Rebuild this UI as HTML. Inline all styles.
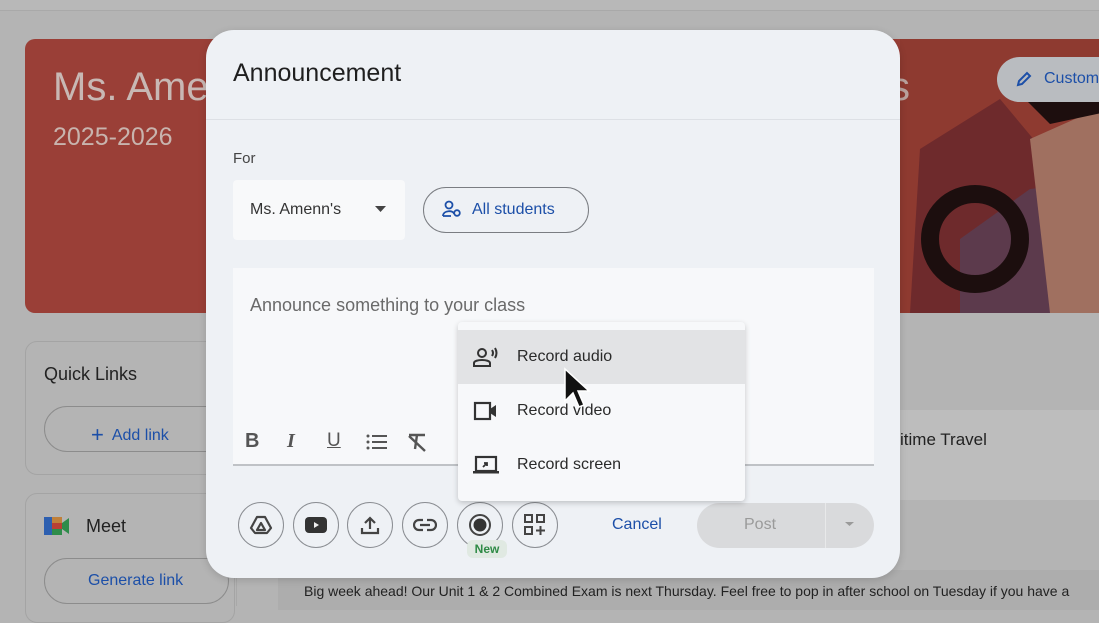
<!DOCTYPE html>
<html><head><meta charset="utf-8"><style>
*{box-sizing:border-box;margin:0;padding:0}
body{width:1099px;height:606px;overflow:hidden;background:#b4b4b4;font-family:"Liberation Sans",Arial,sans-serif;position:relative}
.a{position:absolute}
.circ{position:absolute;width:46px;height:46px;border:1.5px solid #8a8d92;border-radius:50%;top:502px;display:flex;align-items:center;justify-content:center}
.mi{position:absolute;left:0;width:287px;height:54px;display:flex;align-items:center;font-size:16px;color:#2a2a2a}
.mi svg{margin-left:15px;margin-right:18px}
</style></head><body>
<div class="a" style="left:0;top:0;width:1099px;height:11px;background:#b8b8b8;border-bottom:1px solid #a9a9a9"></div>
<!-- banner -->
<div class="a" style="left:25px;top:39px;width:1090px;height:274px;background:#9a3f37;border-radius:10px;overflow:hidden">
 <svg class="a" style="left:875px;top:0" width="220" height="274">
  <path d="M0 0H220V274H0Z" fill="#8e3a30"/>
  <path d="M20 110 L100 60 L150 120 L120 274 L10 274Z" fill="#6e2a2c"/>
  <path d="M60 200 L130 150 L220 140 L220 274 L60 274Z" fill="#5c3a4c"/>
  <path d="M130 100 L220 60 L220 274 L150 274 Z" fill="#a07060"/>
  <circle cx="75" cy="200" r="45" fill="none" stroke="#1c0e0e" stroke-width="18"/>
  <path d="M100 35 L140 20 L220 30 L220 70 L150 85 Z" fill="#1d0e0e"/>
 </svg>
 <div class="a" style="left:28px;top:26px;font-size:40px;color:#c8b8b4">Ms. Amenn's</div>
 <div class="a" style="left:28px;top:84px;font-size:25px;color:#c8b4ae">2025-2026</div>
 <div class="a" style="left:865px;top:26px;font-size:40px;color:#b9a29d">s</div>
</div>
<div class="a" style="left:997px;top:57px;width:130px;height:45px;border-radius:23px;background:#b9bcc0;color:#1c4fa8;font-size:16px;padding:13px 0 0 47px">Customize</div>
<svg class="a" style="left:1016px;top:71px" width="16" height="16"><path d="M2 14 L3 10 L11 2 L14 5 L6 13 Z" fill="none" stroke="#1c4fa8" stroke-width="2"/></svg>
<!-- left cards -->
<div class="a" style="left:25px;top:341px;width:200px;height:134px;border:1px solid #a4a4a4;border-radius:12px"></div>
<div class="a" style="left:44px;top:364px;font-size:18px;color:#222">Quick Links</div>
<div class="a" style="left:44px;top:406px;width:200px;height:46px;border:1px solid #8c8c8c;border-radius:23px;color:#1c4fa8;font-size:16px;padding:13px 0 0 46px"><span style="font-size:22px;position:relative;top:2px;margin-right:8px">+</span>Add link</div>
<div class="a" style="left:25px;top:493px;width:210px;height:130px;border:1px solid #a4a4a4;border-radius:12px"></div>
<svg class="a" style="left:44px;top:515px" width="25" height="22"><rect x="0" y="2" width="8" height="18" fill="#2d5fb0"/><rect x="8" y="2" width="10" height="6" fill="#c0803a"/><rect x="8" y="14" width="10" height="6" fill="#2e8c4a"/><path d="M18 8 L25 3 L25 19 L18 14Z" fill="#2e8c4a"/><rect x="8" y="8" width="10" height="6" fill="#b84034"/></svg>
<div class="a" style="left:86px;top:516px;font-size:18px;color:#222">Meet</div>
<div class="a" style="left:44px;top:558px;width:185px;height:46px;border:1px solid #8c8c8c;border-radius:23px;color:#1c4fa8;font-size:16px;padding:13px 0 0 43px">Generate link</div>
<div class="a" style="left:236px;top:500px;width:1px;height:106px;background:#a8a8a8"></div>
<div class="a" style="left:278px;top:570px;width:830px;height:40px;background:#adadad"></div>
<div class="a" style="left:304px;top:583px;font-size:14px;color:#222;white-space:nowrap">Big week ahead! Our Unit 1 &amp; 2 Combined Exam is next Thursday. Feel free to pop in after school on Tuesday if you have a</div>
<div class="a" style="left:900px;top:410px;width:230px;height:90px;background:#bdbdbd"></div>
<div class="a" style="left:900px;top:430px;font-size:17px;color:#222">itime Travel</div>
<!-- modal -->
<div class="a" style="left:206px;top:30px;width:694px;height:548px;background:#eef1f5;border-radius:28px;box-shadow:0 2px 8px rgba(0,0,0,.15)"></div>
<div class="a" style="left:206px;top:119px;width:694px;height:1px;background:#dde0e5"></div>
<div class="a" style="left:233px;top:59px;font-size:25px;color:#1f1f1f">Announcement</div>
<div class="a" style="left:233px;top:150px;font-size:15px;color:#444">For</div>
<div class="a" style="left:233px;top:180px;width:172px;height:60px;background:#f8f9fa;border-radius:4px;font-size:16px;color:#333;padding:21px 0 0 17px">Ms. Amenn's</div>
<svg class="a" style="left:375px;top:206px" width="12" height="7"><path d="M0 0H11L5.5 6Z" fill="#444"/></svg>
<div class="a" style="left:423px;top:187px;width:166px;height:46px;border:1px solid #7a7d82;border-radius:23px;color:#1c4fa8;font-size:16px;padding:13px 0 0 48px">All students</div>
<svg class="a" style="left:442px;top:200px" width="20" height="18"><circle cx="7" cy="5" r="3.5" fill="none" stroke="#1c4fa8" stroke-width="1.8"/><path d="M1 16 C1 10 12 10 12 14 M1 16H9" fill="none" stroke="#1c4fa8" stroke-width="1.8"/><circle cx="15" cy="13" r="2.8" fill="none" stroke="#1c4fa8" stroke-width="1.8"/></svg>
<div class="a" style="left:233px;top:268px;width:641px;height:198px;background:#f7f8fa;border-bottom:2px solid #bfc2c6"></div>
<div class="a" style="left:250px;top:295px;font-size:18px;color:#6a6a6a">Announce something to your class</div>
<div class="a" style="left:245px;top:430px;font-size:20px;font-weight:bold;color:#555">B</div>
<div class="a" style="left:287px;top:430px;font-size:20px;font-weight:bold;font-style:italic;font-family:'Liberation Serif',serif;color:#555">I</div>
<div class="a" style="left:327px;top:430px;font-size:19px;color:#555;text-decoration:underline">U</div>
<svg class="a" style="left:366px;top:433px" width="22" height="18"><g fill="#555"><circle cx="2" cy="3" r="1.5"/><circle cx="2" cy="9" r="1.5"/><circle cx="2" cy="15" r="1.5"/><rect x="6" y="2" width="15" height="2"/><rect x="6" y="8" width="15" height="2"/><rect x="6" y="14" width="15" height="2"/></g></svg>
<svg class="a" style="left:406px;top:433px" width="22" height="20"><path d="M3 2H19M11 2L9 16M3 3L19 18" stroke="#555" stroke-width="2.4" fill="none"/></svg>
<!-- bottom buttons -->
<div class="circ" style="left:238px"><svg width="24" height="22"><path d="M8 3H16L22 14L18 19H6L2 14Z M12 9L8 16H16Z" fill="none" stroke="#444" stroke-width="2.2" stroke-linejoin="round"/></svg></div>
<div class="circ" style="left:293px"><svg width="24" height="18"><rect x="1" y="1" width="22" height="16" rx="4" fill="#333"/><path d="M10 6L15 9L10 12Z" fill="#eee"/></svg></div>
<div class="circ" style="left:347px"><svg width="20" height="20"><path d="M10 14V3M5 8L10 3L15 8M2 13V18H18V13" fill="none" stroke="#444" stroke-width="2.2"/></svg></div>
<div class="circ" style="left:402px"><svg width="24" height="14"><path d="M10 2H6A5 5 0 0 0 6 12H10M14 2H18A5 5 0 0 1 18 12H14M7 7H17" fill="none" stroke="#444" stroke-width="2.2"/></svg></div>
<div class="circ" style="left:457px"><svg width="24" height="24"><circle cx="12" cy="12" r="10" fill="none" stroke="#444" stroke-width="2"/><circle cx="12" cy="12" r="6.5" fill="#333"/></svg></div>
<div class="circ" style="left:512px"><svg width="22" height="22"><g fill="none" stroke="#444" stroke-width="2"><rect x="1" y="1" width="7" height="7"/><rect x="13" y="1" width="7" height="7"/><rect x="1" y="13" width="7" height="7"/><path d="M16.5 12V21M12 16.5H21"/></g></svg></div>
<div class="a" style="left:467px;top:540px;width:40px;height:18px;background:#e0e9e2;border-radius:6px;color:#2e8a45;font-size:12px;font-weight:bold;text-align:center;padding-top:2px">New</div>
<div class="a" style="left:612px;top:516px;font-size:16px;color:#1c4fa8">Cancel</div>
<div class="a" style="left:697px;top:503px;width:177px;height:45px;background:#d9dadc;border-radius:23px"></div>
<div class="a" style="left:825px;top:503px;width:1px;height:45px;background:#e8e9ea"></div>
<div class="a" style="left:744px;top:516px;font-size:16px;color:#9a9a9a">Post</div>
<svg class="a" style="left:845px;top:522px" width="10" height="5"><path d="M0 0H9L4.5 4Z" fill="#9a9a9a"/></svg>
<!-- menu -->
<div class="a" style="left:458px;top:322px;width:287px;height:179px;background:#f7f8fa;border-radius:4px;box-shadow:0 2px 6px rgba(0,0,0,.2)">
 <div class="mi" style="top:8px;background:#e2e3e5"><svg width="26" height="20"><circle cx="9" cy="6" r="4" fill="none" stroke="#333" stroke-width="2"/><path d="M1 19V16C1 12 17 12 17 16V19Z" fill="none" stroke="#333" stroke-width="2"/><path d="M19 3Q21 6 19 9M22 1Q25 6 22 11" fill="none" stroke="#333" stroke-width="2"/></svg>Record audio</div>
 <div class="mi" style="top:62px"><svg width="26" height="20"><rect x="2" y="2" width="15" height="16" fill="none" stroke="#333" stroke-width="2.2"/><path d="M17 8L23 4V16L17 12Z" fill="#333"/></svg>Record video</div>
 <div class="mi" style="top:116px"><svg width="26" height="20"><rect x="3" y="2" width="20" height="14" fill="none" stroke="#333" stroke-width="2.2"/><rect x="0" y="16" width="26" height="2.5" fill="#333"/><path d="M10 12L14 8M11 8H14V11" stroke="#333" stroke-width="1.8" fill="none"/></svg>Record screen</div>
</div>
<svg class="a" style="left:563px;top:367px" width="30" height="46"><path d="M2 2V34L10 26L16 40L21 38L15 24H26Z" fill="#111" stroke="#fff" stroke-width="1.5"/></svg>
</body></html>
